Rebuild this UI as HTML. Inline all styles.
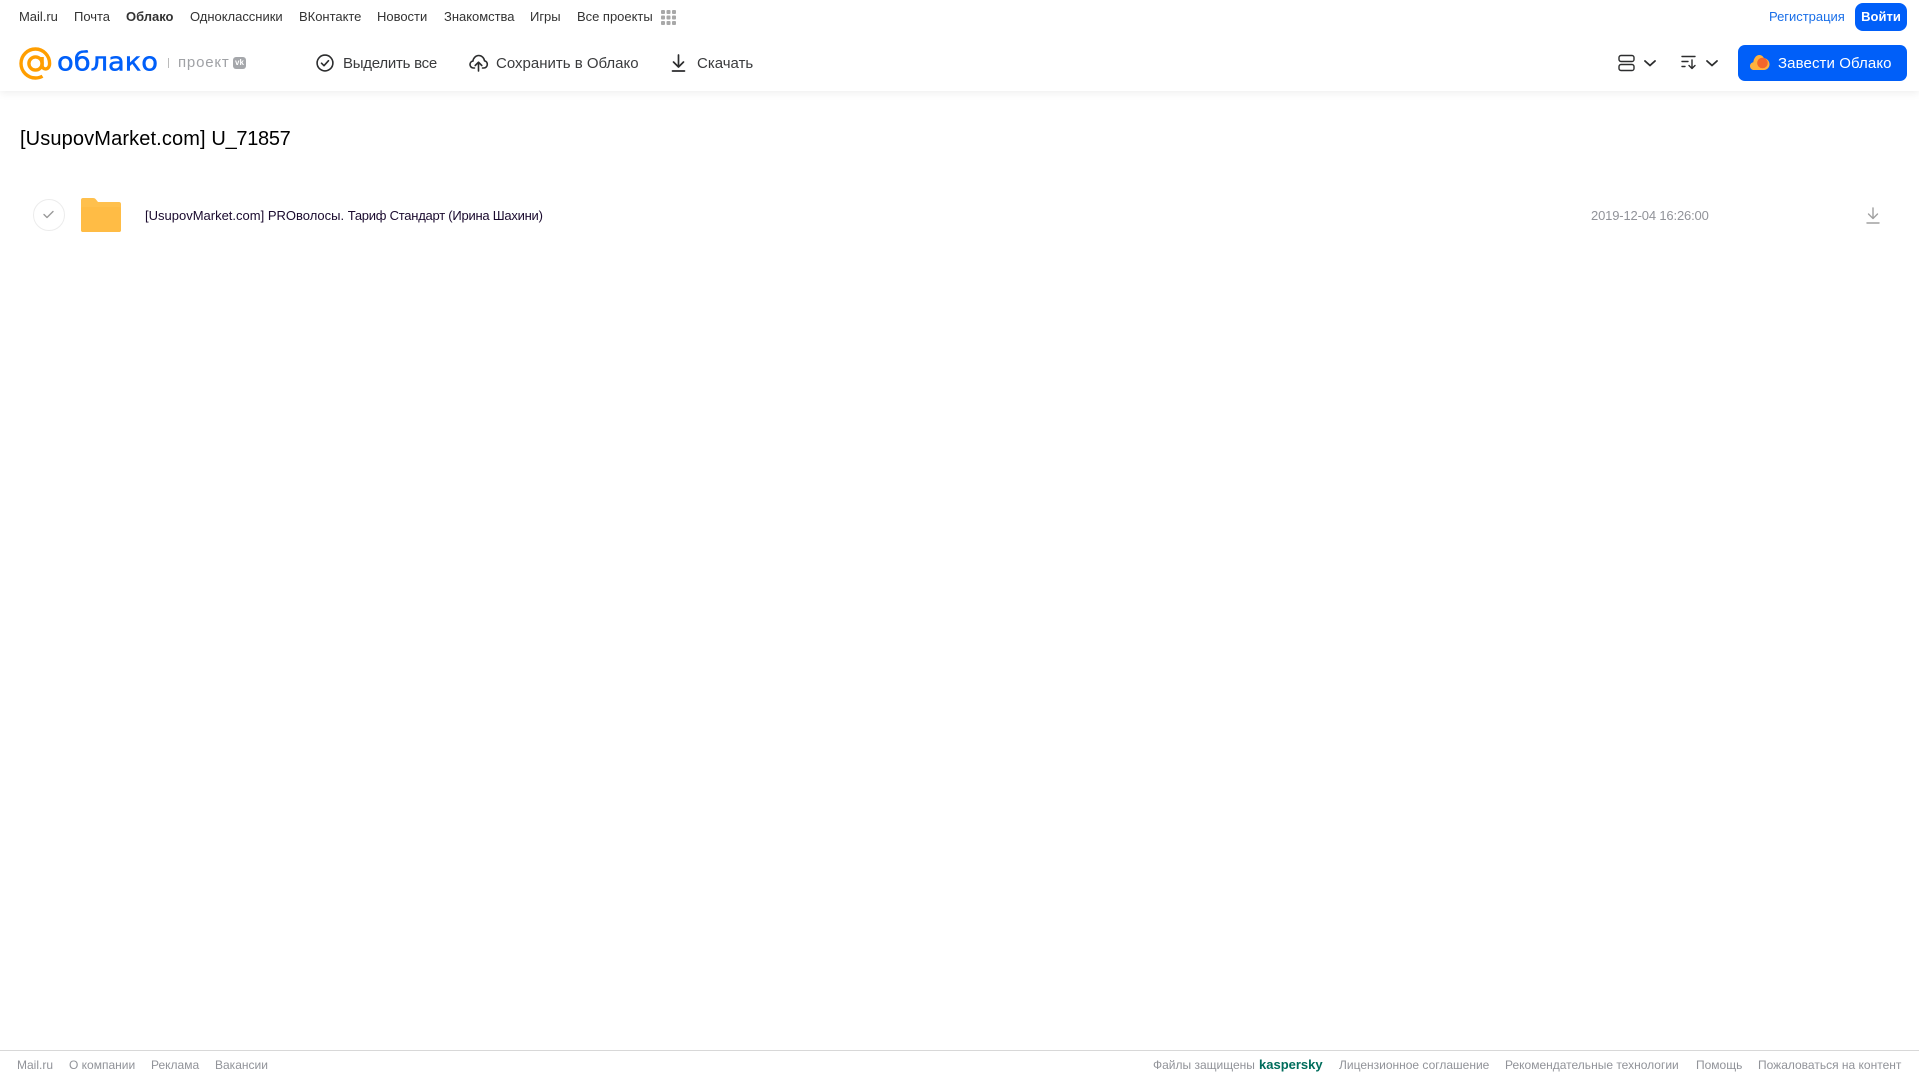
<!DOCTYPE html>
<html lang="ru"><head><meta charset="utf-8"><title>Облако</title>
<style>
html,body{margin:0;padding:0;background:#fff}
body{width:1919px;height:1079px;position:relative;overflow:hidden;font-family:"Liberation Sans",Arial,sans-serif}
.t{position:absolute;white-space:nowrap;line-height:18px}
.n{top:8px;font-size:13px;color:#333;letter-spacing:-.02px}
.h{top:55px;font-size:15px;color:#3a3b3d}
.f{top:1056px;font-size:12px;color:#919399}
svg{position:absolute;overflow:visible}
#hd{position:absolute;left:0;top:0;width:1919px;height:91px;background:#fff;box-shadow:0 2px 8px rgba(0,0,0,.07)}
</style></head><body>
<div id="hd"></div>
<span class="t n" style="left:19px">Mail.ru</span>
<span class="t n" style="left:74px">Почта</span>
<span class="t n" style="left:126px;font-weight:bold">Облако</span>
<span class="t n" style="left:190px">Одноклассники</span>
<span class="t n" style="left:299px">ВКонтакте</span>
<span class="t n" style="left:377px">Новости</span>
<span class="t n" style="left:444px">Знакомства</span>
<span class="t n" style="left:577px">Все проекты</span>
<span class="t n" style="left:530px">Игры</span>
<svg style="left:661px;top:10px" width="15" height="15" fill="#a8a8a8"><rect x="0" y="0" width="4" height="4" rx="1"/><rect x="5.500" y="0" width="4" height="4" rx="1"/><rect x="11" y="0" width="4" height="4" rx="1"/><rect x="0" y="5.500" width="4" height="4" rx="1"/><rect x="5.500" y="5.500" width="4" height="4" rx="1"/><rect x="11" y="5.500" width="4" height="4" rx="1"/><rect x="0" y="11" width="4" height="4" rx="1"/><rect x="5.500" y="11" width="4" height="4" rx="1"/><rect x="11" y="11" width="4" height="4" rx="1"/></svg>
<span class="t n" style="left:1769px;color:#1a6fe8">Регистрация</span>
<div style="position:absolute;left:1855px;top:3px;width:52px;height:28px;border-radius:8px;background:#005ff9;color:#fff;font-size:13px;font-weight:bold;line-height:28px;text-align:center">Войти</div>

<svg style="left:19px;top:47px" width="33" height="33" viewBox="0 0 33 33" fill="none" stroke="#ff9e00" stroke-width="3.400"><circle cx="16.500" cy="16.500" r="6.600"/><path d="M23.100 10v8.200c0 5.200 7.500 5.200 7.500-1.700C30.600 8.700 24.300 2 16.500 2 8.500 2 2 8.500 2 16.500S8.500 31 16.500 31c2.700 0 5-.6 7-1.800"/></svg>
<svg style="left:57px;top:44px" width="104" height="36"><text x="0" y="26.500" font-family="DejaVu Sans" font-size="26" fill="#005ff9" stroke="#005ff9" stroke-width=".5" textLength="101" lengthAdjust="spacingAndGlyphs">облако</text></svg>
<div style="position:absolute;left:168px;top:58px;width:1px;height:10px;background:#bbb"></div>
<span class="t" style="left:178px;top:54px;font-size:15px;color:#a0a2a6;letter-spacing:.8px">проект</span>
<div style="position:absolute;left:233px;top:57px;width:13px;height:12px;border-radius:3px;background:#a5a7ab;color:#fff;font-size:8px;font-weight:bold;line-height:12px;text-align:center">vk</div>

<svg style="left:316px;top:54px" width="18" height="18" viewBox="0 0 18 18" fill="none" stroke="#2c2d2e" stroke-width="1.600"><circle cx="9" cy="9" r="7.900"/><path d="M5.500 9.200l2.500 2.500 4.500-5" stroke-linecap="round" stroke-linejoin="round"/></svg>
<span class="t h" style="left:343px;letter-spacing:-.25px">Выделить все</span>
<svg style="left:469px;top:54px" width="19" height="18" viewBox="0 0 19 18" fill="none" stroke="#2c2d2e" stroke-width="1.600" stroke-linecap="round" stroke-linejoin="round"><path d="M5.500 14H4.500C2.500 14 1 12.500 1 10.500 1 8.800 2.200 7.400 3.900 7.100 4.300 4 6.700 1.500 9.700 1.500c3 0 5.400 2.300 5.800 5.300 1.700.3 2.800 1.800 2.800 3.600 0 2-1.500 3.600-3.500 3.600H13.500"/><path d="M9.500 17V8.500M6.200 11.500l3.300-3.300 3.300 3.300"/></svg>
<span class="t h" style="left:496px">Сохранить в Облако</span>
<svg style="left:671px;top:54px" width="15" height="18" viewBox="0 0 15 18" fill="none" stroke="#2c2d2e" stroke-width="1.700" stroke-linecap="round" stroke-linejoin="round"><path d="M7.500 1v11.500M2.500 8l5 5 5-5M1.500 17h12"/></svg>
<span class="t h" style="left:697px">Скачать</span>

<svg style="left:1618px;top:54px" width="17" height="18" viewBox="0 0 17 18" fill="none" stroke="#2c2d2e" stroke-width="1.400"><rect x="1" y="1.500" width="15" height="6" rx="2"/><rect x="1" y="10.500" width="15" height="6" rx="2"/></svg>
<svg style="left:1644px;top:60px" width="12" height="7" fill="none" stroke="#2c2d2e" stroke-width="1.800" stroke-linecap="round" stroke-linejoin="round"><path d="M1 1l5 4.500 5-4.500"/></svg>
<svg style="left:1681px;top:55px" width="16" height="15" fill="none" stroke="#2c2d2e" stroke-width="1.400" stroke-linecap="round" stroke-linejoin="round"><path d="M1 1.500h13M1 6.500h6M1 11.500h3M11 5v8.500M8 10.500l3 3 3-3"/></svg>
<svg style="left:1706px;top:60px" width="12" height="7" fill="none" stroke="#2c2d2e" stroke-width="1.800" stroke-linecap="round" stroke-linejoin="round"><path d="M1 1l5 4.500 5-4.500"/></svg>

<div style="position:absolute;left:1738px;top:45px;width:169px;height:36px;border-radius:7px;background:#005ff9"></div>
<svg style="left:1750px;top:54px" width="20" height="17" viewBox="0 0 20 17"><path d="M4 16C1.800 16 0 14.300 0 12.100 0 10.100 1.500 8.600 3.300 8.300 3.700 4.500 6.100 1 9.200 1c2.200 0 4 1.300 4.800 3.300C17 4.500 19.500 7 19.500 10.300c0 3.200-2.400 5.700-5.500 5.700z" fill="#ffb13d"/><circle cx="12.500" cy="9" r="5.300" fill="#f2662a"/></svg>
<span class="t" style="left:1778px;top:55px;font-size:15px;color:#fff;letter-spacing:.1px">Завести Облако</span>

<span class="t" style="left:20px;top:127px;font-size:20px;line-height:24px;color:#000"><span style="letter-spacing:.13px">[UsupovMarket.com] </span><span style="letter-spacing:-.3px">U_71857</span></span>

<div style="position:absolute;left:33px;top:199px;width:30px;height:30px;border:1px solid #ececec;border-radius:50%"></div>
<svg style="left:43px;top:210px" width="11" height="9" fill="none" stroke="#999" stroke-width="1.400" stroke-linecap="round" stroke-linejoin="round"><path d="M1 4.500l3 3 6-6"/></svg>
<svg style="left:81px;top:198px" width="40" height="34" viewBox="0 0 40 34"><path d="M2 0h10c1.500 0 2.300.6 3 1.500L17 4h21c1.200 0 2 .8 2 2v26c0 1.200-.8 2-2 2H2c-1.200 0-2-.8-2-2V2C0 .8.800 0 2 0z" fill="#ffc04d"/><rect x="0" y="9" width="40" height="25" rx="2" fill="#ffbc45"/></svg>
<span class="t" style="left:145px;top:207px;font-size:13px;color:#1a0a2e">[UsupovMarket.com] PROволосы. <span style="letter-spacing:-.25px">Тариф Стандарт (Ирина Шахини)</span></span>
<span class="t" style="left:1591px;top:207px;font-size:13px;color:#919399;letter-spacing:-.16px">2019-12-04 16:26:00</span>
<svg style="left:1866px;top:207px" width="14" height="18" fill="none" stroke="#a0a0a0" stroke-width="1.400" stroke-linecap="round" stroke-linejoin="round"><path d="M7 1v10M2.500 7l4.500 4.500L11.500 7M1 16h12"/></svg>

<div style="position:absolute;left:0;top:1050px;width:1919px;height:1px;background:#d8d8d8"></div>
<span class="t f" style="left:17px">Mail.ru</span>
<span class="t f" style="left:69px">О компании</span>
<span class="t f" style="left:151px">Реклама</span>
<span class="t f" style="left:215px">Вакансии</span>
<span class="t f" style="left:1153px">Файлы защищены</span>
<span class="t f" style="left:1259px;color:#006d5c;font-weight:bold;font-size:13px">kaspersky</span>
<span class="t f" style="left:1339px">Лицензионное соглашение</span>
<span class="t f" style="left:1505px">Рекомендательные технологии</span>
<span class="t f" style="left:1696px">Помощь</span>
<span class="t f" style="left:1758px">Пожаловаться на контент</span>
</body></html>
